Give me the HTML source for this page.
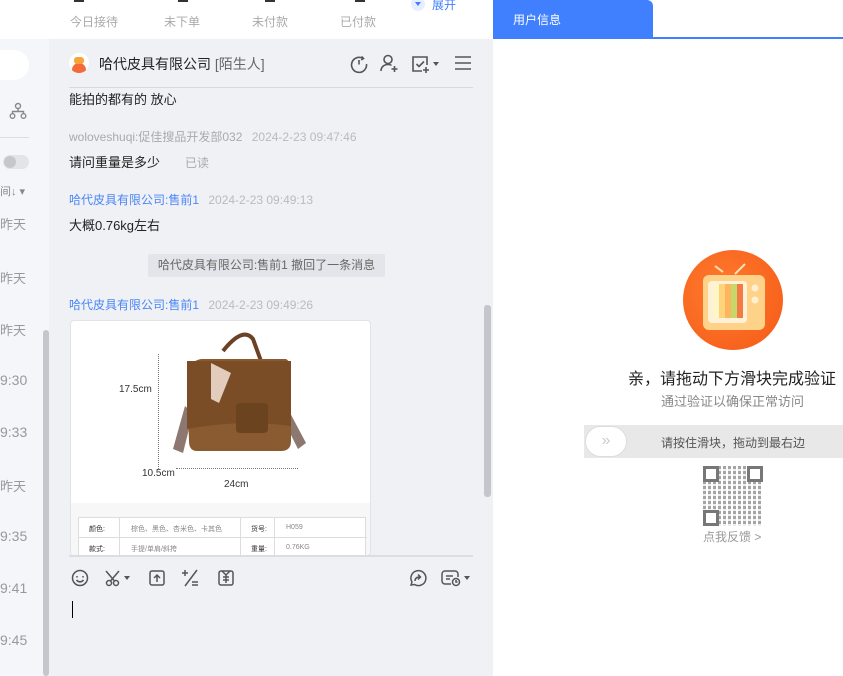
<!DOCTYPE html>
<html><head><meta charset="utf-8"><style>
*{margin:0;padding:0;box-sizing:border-box}
body{width:843px;height:676px;overflow:hidden;position:relative;background:#fff;font-family:"Liberation Sans","Noto Sans CJK SC",sans-serif;}
.a{position:absolute;white-space:nowrap}
.g{color:#aaa}
svg{position:absolute}
</style></head><body>
<div class="a" style="left:0;top:0;width:493px;height:39px;background:#fff"></div>
<div class="a" style="left:74px;top:0;width:10px;height:2px;background:#333"></div>
<div class="a" style="left:178px;top:0;width:10px;height:2px;background:#333"></div>
<div class="a" style="left:265px;top:0;width:10px;height:2px;background:#333"></div>
<div class="a" style="left:355px;top:0;width:10px;height:2px;background:#333"></div>
<div class="a g" style="left:70px;top:13px;font-size:12px">今日接待</div>
<div class="a g" style="left:164px;top:13px;font-size:12px">未下单</div>
<div class="a g" style="left:252px;top:13px;font-size:12px">未付款</div>
<div class="a g" style="left:340px;top:13px;font-size:12px">已付款</div>
<div class="a" style="left:411px;top:-3px;width:14px;height:14px;border-radius:50%;background:#e6eeff"></div>
<div class="a" style="left:415px;top:2px;border-left:3px solid transparent;border-right:3px solid transparent;border-top:4px solid #4080ff"></div>
<div class="a" style="left:432px;top:-4px;font-size:12px;color:#4080ff">展开</div>
<div class="a" style="left:0;top:39px;width:49px;height:637px;background:#f5f6f9"></div>
<div class="a" style="left:0;top:50px;width:29px;height:30px;border-radius:0 15px 15px 0;background:#fff"></div>
<svg style="left:9px;top:102px" width="18" height="18" viewBox="0 0 18 18" fill="none" stroke="#888" stroke-width="1.4"><circle cx="9" cy="4" r="2.5"/><circle cx="3.5" cy="14" r="2.3"/><circle cx="14.5" cy="14" r="2.3"/><path d="M9 6.5v3M3.5 11.7V9.5h11v2.2"/></svg>
<div class="a" style="left:0;top:137px;width:29px;height:1px;background:#ddd"></div>
<div class="a" style="left:3px;top:155px;width:26px;height:14px;border-radius:7px;background:#e3e4e8"></div>
<div class="a" style="left:4px;top:156px;width:12px;height:12px;border-radius:6px;background:#c5c7cc"></div>
<div class="a" style="left:0;top:183px;font-size:11px;color:#888">间↓ ▾</div>
<div class="a" style="left:0;top:214px;font-size:13px;color:#999">昨天</div>
<div class="a" style="left:0;top:268px;font-size:13px;color:#999">昨天</div>
<div class="a" style="left:0;top:320px;font-size:13px;color:#999">昨天</div>
<div class="a" style="left:0;top:372px;font-size:14px;color:#999">9:30</div>
<div class="a" style="left:0;top:424px;font-size:14px;color:#999">9:33</div>
<div class="a" style="left:0;top:476px;font-size:13px;color:#999">昨天</div>
<div class="a" style="left:0;top:528px;font-size:14px;color:#999">9:35</div>
<div class="a" style="left:0;top:580px;font-size:14px;color:#999">9:41</div>
<div class="a" style="left:0;top:632px;font-size:14px;color:#999">9:45</div>
<div class="a" style="left:43px;top:330px;width:6px;height:346px;border-radius:3px;background:#c4c6cc"></div>
<div class="a" style="left:49px;top:39px;width:444px;height:637px;background:#f0f1f5"></div>
<div class="a" style="left:69px;top:53px;width:20px;height:20px;border-radius:50%;background:#fff;overflow:hidden"><div style="position:absolute;left:3px;top:10px;width:14px;height:10px;border-radius:7px 7px 0 0;background:#f46b3a"></div><div style="position:absolute;left:5px;top:4px;width:10px;height:7px;border-radius:3px;background:#f9a23a"></div></div>
<div class="a" style="left:99px;top:54px;font-size:14px;color:#222">哈代皮具有限公司 <span style="color:#666">[陌生人]</span></div>
<svg style="left:349px;top:54px" width="20" height="20" viewBox="0 0 20 20" fill="none" stroke="#555" stroke-width="1.6"><path d="M14 4.5A7.5 7.5 0 1 0 17.5 10"/><path d="M10 6v4.5"/><path d="M12.5 2.5l2 2-2.3 1.5"/></svg>
<svg style="left:379px;top:53px" width="20" height="20" viewBox="0 0 20 20" fill="none" stroke="#555" stroke-width="1.6"><circle cx="9" cy="6.5" r="4"/><path d="M2 18c0-4 3-6.5 7-6.5 1.5 0 2.5.3 3.5.8"/><path d="M15.5 13v6M12.5 16h6"/></svg>
<svg style="left:410px;top:54px" width="20" height="20" viewBox="0 0 20 20" fill="none" stroke="#555" stroke-width="1.6"><path d="M12 17H3V3h14v8"/><path d="M6.5 10l2.5 2.5 5-5"/><path d="M16 13v6M13 16h6"/></svg>
<div class="a" style="left:433px;top:62px;border-left:3px solid transparent;border-right:3px solid transparent;border-top:4px solid #555"></div>
<svg style="left:454px;top:55px" width="18" height="16" viewBox="0 0 18 16" stroke="#555" stroke-width="1.6"><path d="M1 2h16M1 8h16M1 14h16"/></svg>
<div class="a" style="left:69px;top:87px;width:404px;height:1px;background:#d8d9dd"></div>
<div class="a" style="left:69px;top:89px;font-size:13px;color:#222">能拍的都有的 放心</div>
<div class="a" style="left:69px;top:128px;font-size:12px;color:#aaa">woloveshuqi:促佳搜品开发部032 <span style="margin-left:6px;color:#bbb">2024-2-23 09:47:46</span></div>
<div class="a" style="left:69px;top:152px;font-size:13px;color:#222">请问重量是多少</div>
<div class="a" style="left:185px;top:154px;font-size:12px;color:#aaa">已读</div>
<div class="a" style="left:69px;top:191px;font-size:12px;color:#4a86f7">哈代皮具有限公司:售前1 <span style="margin-left:6px;color:#bbb">2024-2-23 09:49:13</span></div>
<div class="a" style="left:69px;top:215px;font-size:13px;color:#222">大概0.76kg左右</div>
<div class="a" style="left:148px;top:254px;width:237px;height:23px;background:#e4e5ea;border-radius:2px;font-size:12px;color:#666;line-height:23px;text-align:center">哈代皮具有限公司:售前1 撤回了一条消息</div>
<div class="a" style="left:69px;top:296px;font-size:12px;color:#4a86f7">哈代皮具有限公司:售前1 <span style="margin-left:6px;color:#bbb">2024-2-23 09:49:26</span></div>
<div class="a" style="left:70px;top:320px;width:301px;height:236px;background:#fff;border:1px solid #e2e3e7;border-radius:4px;overflow:hidden">
 <div style="position:absolute;left:0;top:182px;width:300px;height:60px;background:#f7f7f7"></div>
 <div style="position:absolute;left:48px;top:63px;font-size:10px;color:#333">17.5cm</div>
 <div style="position:absolute;left:71px;top:147px;font-size:10px;color:#333">10.5cm</div>
 <div style="position:absolute;left:153px;top:158px;font-size:10px;color:#333">24cm</div>
 <div style="position:absolute;left:87px;top:33px;width:0;height:115px;border-left:1px dotted #777"></div>
 <div style="position:absolute;left:105px;top:147px;width:122px;border-top:1px dotted #777"></div>
 <svg style="left:90px;top:10px" width="160" height="130" viewBox="0 0 160 130"><path d="M62 20 Q82 -5 92 8 L100 30" fill="none" stroke="#6b4226" stroke-width="4"/><path d="M24 75 L12 118 L22 122 L32 82Z" fill="#8c7870"/><path d="M128 80 L145 112 L137 118 L122 88Z" fill="#8c7870"/><path d="M26 45 Q28 30 40 28 H125 Q130 30 130 45 V110 Q130 120 120 120 H36 Q28 120 28 110Z" fill="#8a5a30"/><path d="M26 30 H130 V95 Q78 88 26 98Z" fill="#7a4d26"/><rect x="75" y="72" width="32" height="30" rx="4" fill="#6c431f"/><path d="M50 32 L70 42 L58 72 L50 68Z" fill="#e2ccbc"/></svg>
 <div style="position:absolute;left:7px;top:196px;width:288px;height:40px;border:1px solid #ddd;background:#fff;font-size:7px;color:#888">
  <div style="position:absolute;left:0;top:19px;width:288px;border-top:1px solid #ddd"></div>
  <div style="position:absolute;left:40px;top:0;height:40px;border-left:1px solid #ddd"></div>
  <div style="position:absolute;left:161px;top:0;height:40px;border-left:1px solid #ddd"></div>
  <div style="position:absolute;left:195px;top:0;height:40px;border-left:1px solid #ddd"></div>
  <div style="position:absolute;left:10px;top:6px;color:#333">颜色:</div><div style="position:absolute;left:52px;top:6px">棕色、黑色、杏米色、卡其色</div><div style="position:absolute;left:172px;top:6px;color:#333">货号:</div><div style="position:absolute;left:207px;top:6px">H059</div>
  <div style="position:absolute;left:10px;top:26px;color:#333">款式:</div><div style="position:absolute;left:52px;top:26px">手提/单肩/斜挎</div><div style="position:absolute;left:172px;top:26px;color:#333">重量:</div><div style="position:absolute;left:207px;top:26px">0.76KG</div>
 </div>
</div>
<div class="a" style="left:484px;top:305px;width:7px;height:192px;border-radius:3px;background:#c4c6cc"></div>
<div class="a" style="left:69px;top:555px;width:404px;height:2px;background:#dcdde1"></div>
<svg style="left:70px;top:568px" width="20" height="20" viewBox="0 0 20 20" fill="none" stroke="#555" stroke-width="1.5"><circle cx="10" cy="10" r="7.5"/><path d="M7 8v1.5M13 8v1.5M6.5 12c2 2.5 5 2.5 7 0"/></svg>
<svg style="left:104px;top:568px" width="20" height="20" viewBox="0 0 20 20" fill="none" stroke="#555" stroke-width="1.5"><circle cx="5" cy="15" r="2.5"/><circle cx="12" cy="15" r="2.5"/><path d="M6.5 13L15 3M10.5 13L2 3"/></svg>
<div class="a" style="left:124px;top:576px;border-left:3px solid transparent;border-right:3px solid transparent;border-top:4px solid #555"></div>
<svg style="left:147px;top:568px" width="20" height="20" viewBox="0 0 20 20" fill="none" stroke="#555" stroke-width="1.5"><rect x="3" y="3" width="14" height="14" rx="2"/><path d="M10 14V7M7 10l3-3 3 3"/></svg>
<svg style="left:181px;top:568px" width="20" height="20" viewBox="0 0 20 20" fill="none" stroke="#555" stroke-width="1.5"><path d="M1 5h6M4 2v6M16 2L4 18M11 14h6M11 17h6"/></svg>
<svg style="left:216px;top:568px" width="20" height="20" viewBox="0 0 20 20" fill="none" stroke="#555" stroke-width="1.5"><rect x="3" y="3" width="14" height="14" rx="2"/><path d="M6 3l4 4 4-4M7 9h6M7 12h6M10 7v8"/></svg>
<svg style="left:408px;top:568px" width="20" height="20" viewBox="0 0 20 20" fill="none" stroke="#555" stroke-width="1.5"><path d="M3 17l1-3A7.5 7.5 0 1 1 6.5 16.5z"/><path d="M7 13c0-3 2-4 5-4M10 6.5l2.5 2.5-2.5 2.5"/></svg>
<svg style="left:441px;top:568px" width="22" height="20" viewBox="0 0 22 20" fill="none" stroke="#555" stroke-width="1.5"><path d="M10 16H4a3 3 0 0 1-3-3V6a3 3 0 0 1 3-3h10a3 3 0 0 1 3 3v3"/><path d="M5 8h7M5 11h4"/><circle cx="15" cy="14" r="3.5"/><path d="M15 12v2h1.5"/></svg>
<div class="a" style="left:464px;top:576px;border-left:3px solid transparent;border-right:3px solid transparent;border-top:4px solid #555"></div>
<div class="a" style="left:72px;top:601px;width:1px;height:17px;background:#000"></div>
<div class="a" style="left:493px;top:0;width:160px;height:39px;background:#4080ff;border-radius:0 6px 0 0"></div>
<div class="a" style="left:493px;top:37px;width:350px;height:2px;background:#4080ff"></div>
<div class="a" style="left:513px;top:11px;font-size:12px;color:#fff">用户信息</div>
<div class="a" style="left:683px;top:250px;width:100px;height:100px;border-radius:50%;background:radial-gradient(circle at 40% 40%,#ff7a30,#f45a15)"></div>
<svg style="left:683px;top:250px" width="100" height="100" viewBox="0 0 100 100"><path d="M40 22l-8-6M62 14l-10 10" stroke="#fde0b0" stroke-width="2"/><rect x="20" y="25" width="62" height="55" rx="6" fill="#ffd28a"/><rect x="25" y="31" width="39" height="42" rx="4" fill="#fff1d8"/><rect x="30" y="34" width="6" height="34" fill="#fff6c8"/><rect x="36" y="34" width="6" height="34" fill="#ffd37a"/><rect x="42" y="34" width="6" height="34" fill="#ffb45e"/><rect x="48" y="34" width="6" height="34" fill="#c6d86a"/><rect x="54" y="34" width="6" height="34" fill="#f47a45"/><circle cx="72" cy="38" r="3.5" fill="#fff0d0"/><circle cx="72" cy="50" r="3.5" fill="#fff0d0"/></svg>
<div class="a" style="left:628px;top:365px;font-size:16px;color:#222">亲，请拖动下方滑块完成验证</div>
<div class="a" style="left:661px;top:391px;font-size:13px;color:#888">通过验证以确保正常访问</div>
<div class="a" style="left:584px;top:425px;width:259px;height:33px;background:#e8e8e8"></div>
<div class="a" style="left:585px;top:426px;width:42px;height:31px;border-radius:16px;background:#fff;border:1px solid #ddd;font-size:16px;color:#ccc;text-align:center;line-height:28px">»</div>
<div class="a" style="left:661px;top:434px;font-size:12px;color:#555">请按住滑块，拖动到最右边</div>
<div class="a" style="left:703px;top:466px;width:60px;height:60px;background:repeating-linear-gradient(90deg,#888 0 3px,#fff 3px 5px),#888;opacity:.75"></div>
<div class="a" style="left:703px;top:466px;width:60px;height:60px;background:repeating-linear-gradient(0deg,rgba(255,255,255,.8) 0 2px,transparent 2px 5px)"></div>
<div class="a" style="left:703px;top:466px;width:16px;height:16px;border:3px solid #777;background:#fff"></div>
<div class="a" style="left:747px;top:466px;width:16px;height:16px;border:3px solid #777;background:#fff"></div>
<div class="a" style="left:703px;top:510px;width:16px;height:16px;border:3px solid #777;background:#fff"></div>
<div class="a" style="left:703px;top:528px;font-size:12px;color:#999">点我反馈 ></div>
</body></html>
